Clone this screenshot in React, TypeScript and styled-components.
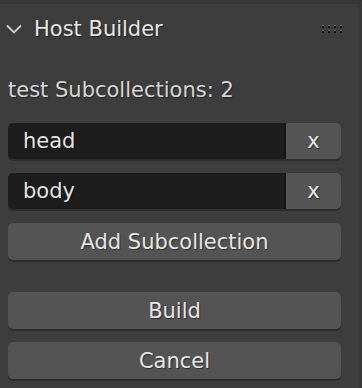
import styled, { createGlobalStyle } from "styled-components"

const Global = createGlobalStyle`
    html, body {
        margin: 0;
        padding: 0;
        background: #3d3d3d;
    }
    * { box-sizing: border-box; }
`

const Panel = styled.div`
    width: 362px;
    height: 388px;
    background: #3d3d3d;
    border-top: 4px solid #363636;
    border-right: 3px solid #393939;
    font-family: "DejaVu Sans", sans-serif;
    font-size: 21px;
    color: #e6e6e6;
    text-shadow: 1px 1px 1px rgba(0, 0, 0, 0.45);
    display: flex;
    flex-direction: column;
`

const Header = styled.div`
    height: 50px;
    display: flex;
    align-items: center;
    padding: 0 17px 0 6px;
    gap: 12px;
`

const Title = styled.div`
    flex: 1;
    padding-bottom: 1px;
`

const Grip = styled.div`
    display: grid;
    grid-template-columns: repeat(4, 2px);
    grid-template-rows: repeat(2, 2px);
    column-gap: 4px;
    row-gap: 3px;
    span {
        background: #0c0c0c;
        box-shadow: 0 -1px 0 #6a6a6a;
    }
`

const Body = styled.div`
    display: flex;
    flex-direction: column;
    padding: 0 18px 0 8px;
`

const Label = styled.div`
    color: #d6d6d6;
    margin-top: 24px;
    margin-bottom: 20px;
    line-height: 25px;
`

const Row = styled.div`
    display: flex;
    height: 36px;
    margin-bottom: 14px;
    border-radius: 5px;
    box-shadow: 0 2px 0 #2c2c2c;
`

const Field = styled.div`
    flex: 1;
    background: #1d1d1d;
    border-radius: 5px 0 0 5px;
    border-right: 2px solid #181818;
    padding-left: 15px;
    display: flex;
    align-items: center;
`

const Button = styled.div<{ $wide?: boolean; $gap?: number }>`
    ${(p) => (p.$wide ? "" : "width: 55px;")}
    height: ${(p) => (p.$wide ? "37px" : "36px")};
    background: #545454;
    border-radius: ${(p) => (p.$wide ? "5px" : "0 5px 5px 0")};
    box-shadow: ${(p) => (p.$wide ? "0 2px 0 #2c2c2c" : "none")};
    display: flex;
    align-items: center;
    justify-content: center;
    margin-bottom: ${(p) => p.$gap ?? 0}px;
`

const rows = ["head", "body"]

export default function App() {
    return <>
        <Global />
        <Panel>
            <Header>
                <svg width="16" height="10" viewBox="0 0 16 10">
                    <path d="M1 1.5 L8 8.5 L15 1.5" fill="none" stroke="#cfcfcf" strokeWidth="1.8" />
                </svg>
                <Title>Host Builder</Title>
                <Grip>
                    {Array.from({ length: 8 }).map((_, i) => <span key={i} />)}
                </Grip>
            </Header>
            <Body>
                <Label>test Subcollections: 2</Label>
                {rows.map((r) => (
                    <Row key={r}>
                        <Field>{r}</Field>
                        <Button>x</Button>
                    </Row>
                ))}
                <Button $wide $gap={32}>Add Subcollection</Button>
                <Button $wide $gap={13}>Build</Button>
                <Button $wide>Cancel</Button>
            </Body>
        </Panel>
    </>
}
